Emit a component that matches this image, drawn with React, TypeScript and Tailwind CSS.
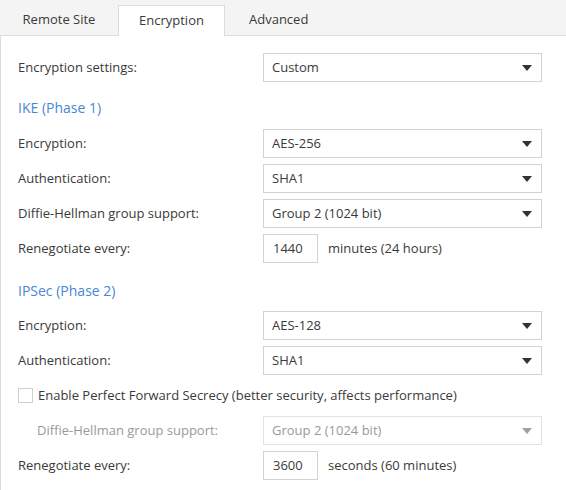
import React from "react"

const font = { fontFamily: '"Open Sans", "Noto Sans", Arial, sans-serif' }

function Caret({ disabled }: { disabled?: boolean }) {
  return (
    <svg width="10" height="6" viewBox="0 0 10 6" className={disabled ? "fill-[#a0a0a0]" : "fill-[#333]"}>
      <path d="M0 0h10L5 6z" />
    </svg>
  )
}

function Select({ value, disabled }: { value: string; disabled?: boolean }) {
  return (
    <div
      className={
        "flex h-[29px] w-[279px] items-center justify-between border pl-[8px] pr-[9px] " +
        (disabled ? "border-[#e2e2e2] text-[#9a9a9a]" : "border-[#d3d3d3] text-[#3a3a3a]")
      }
    >
      <span>{value}</span>
      <Caret disabled={disabled} />
    </div>
  )
}

function Row({ label, children, disabled, indent }: { label: string; children: React.ReactNode; disabled?: boolean; indent?: boolean }) {
  return (
    <div className="flex h-[29px] items-center">
      <div className={"w-[245px] shrink-0 " + (indent ? "pl-[19px] " : "") + (disabled ? "text-[#9a9a9a]" : "text-[#3a3a3a]")}>{label}</div>
      {children}
    </div>
  )
}

function Reneg({ value, unit }: { value: string; unit: string }) {
  return (
    <div className="flex items-center gap-[10px]">
      <div className="flex h-[29px] w-[55px] items-center border border-[#d3d3d3] pl-[9px] text-[#3a3a3a]">{value}</div>
      <span className="text-[#3a3a3a]">{unit}</span>
    </div>
  )
}

function Heading({ children }: { children: React.ReactNode }) {
  return <div className="flex h-[20px] items-center text-[14px] text-[#4a86d4]">{children}</div>
}

export default function App() {
  return (
    <div className="h-[490px] w-[566px] bg-white text-[13px]" style={font}>
      <div className="flex h-[36px] items-end border-b border-[#dcdcdc] bg-[#f4f4f4] text-[#3a3a3a]">
        <div className="flex h-[31px] w-[118px] items-center justify-center">Remote Site</div>
        <div className="relative -mb-px flex h-[31px] w-[107px] items-center justify-center border border-b-0 border-[#dcdcdc] bg-white">
          Encryption
        </div>
        <div className="flex h-[31px] items-center px-[24px]">Advanced</div>
      </div>
      <div className="h-[454px] border-l border-[#dcdcdc] pl-[17px] pt-[17px]">
        <Row label="Encryption settings:">
          <Select value="Custom" />
        </Row>
        <div className="mb-[12px] mt-[15px]">
          <Heading>IKE (Phase 1)</Heading>
        </div>
        <div className="flex flex-col gap-[6px]">
          <Row label="Encryption:">
            <Select value="AES-256" />
          </Row>
          <Row label="Authentication:">
            <Select value="SHA1" />
          </Row>
          <Row label="Diffie-Hellman group support:">
            <Select value="Group 2 (1024 bit)" />
          </Row>
          <Row label="Renegotiate every:">
            <Reneg value="1440" unit="minutes (24 hours)" />
          </Row>
        </div>
        <div className="mb-[11px] mt-[17px]">
          <Heading>IPSec (Phase 2)</Heading>
        </div>
        <div className="flex flex-col gap-[6px]">
          <Row label="Encryption:">
            <Select value="AES-128" />
          </Row>
          <Row label="Authentication:">
            <Select value="SHA1" />
          </Row>
          <div className="flex h-[29px] items-center gap-[5px] text-[#3a3a3a]">
            <div className="h-[15px] w-[15px] border border-[#cfcfcf] bg-white" />
            <span>Enable Perfect Forward Secrecy (better security, affects performance)</span>
          </div>
          <Row label="Diffie-Hellman group support:" disabled indent>
            <Select value="Group 2 (1024 bit)" disabled />
          </Row>
          <Row label="Renegotiate every:">
            <Reneg value="3600" unit="seconds (60 minutes)" />
          </Row>
        </div>
      </div>
    </div>
  )
}
